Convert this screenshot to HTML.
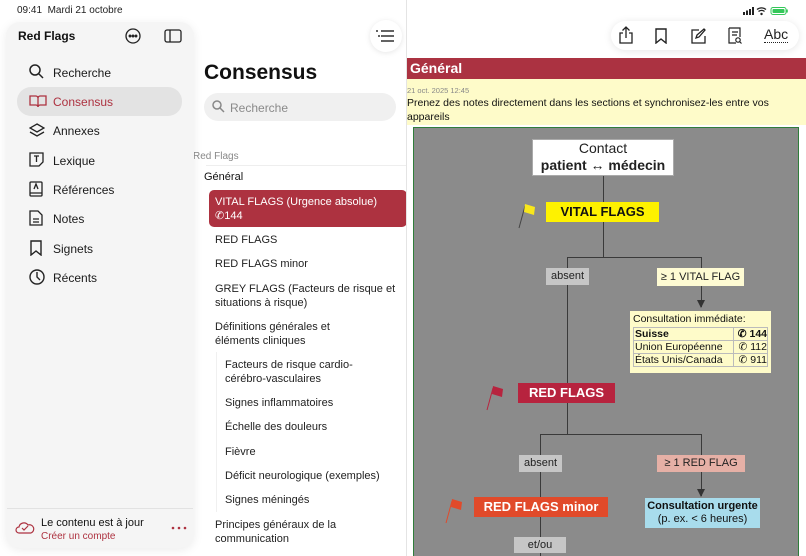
<!DOCTYPE html>
<html style="overflow:hidden;width:806px;height:556px"><head><meta charset="utf-8"><style>
*{margin:0;padding:0;box-sizing:border-box}
body{width:806px;height:556px;overflow:hidden;background:#fff;font-family:"Liberation Sans",sans-serif;position:relative;color:#111}
.a{position:absolute}
.sb{left:6px;top:22px;width:188px;height:526px;background:#f5f5f5;border-radius:14px;box-shadow:0 2px 10px rgba(0,0,0,.08)}
.nav{position:absolute;left:53px;font-size:12px;color:#1a1a1a}
.ic{position:absolute;left:29px}
.li{position:absolute;font-size:11px;color:#222;line-height:14px}
.dg{left:413px;top:127px;width:386px;height:440px;background:#8b8b8b;border:1px solid #2f7d3a}
.bx{position:absolute;text-align:center;font-size:11px;color:#222}
.ln{position:absolute;background:#3a3a3a}
</style></head><body>
<div class="a" style="left:17px;top:5px;font-size:10px;color:#222">09:41&nbsp;&nbsp;Mardi 21 octobre</div>
<svg class="a" style="left:743px;top:6px" width="46" height="10"><rect x="0" y="6" width="2" height="3" fill="#222"/><rect x="3" y="4.5" width="2" height="4.5" fill="#222"/><rect x="6" y="3" width="2" height="6" fill="#222"/><rect x="9" y="1" width="2" height="8" fill="#222"/><path d="M14 3.5a7 7 0 0 1 9 0M15.5 5.5a4.5 4.5 0 0 1 6 0" stroke="#222" stroke-width="1.3" fill="none"/><circle cx="18.5" cy="8" r="1.2" fill="#222"/><rect x="28" y="1.5" width="15" height="7" rx="2" fill="none" stroke="#34c759" stroke-width="1"/><rect x="29.5" y="3" width="12" height="4" rx="1" fill="#34c759"/><rect x="43.5" y="3.5" width="1.3" height="3" fill="#34c759"/></svg>
<!-- middle column -->
<div class="a" style="left:370px;top:20px;width:32px;height:32px;border-radius:16px;background:#fff;box-shadow:0 1px 6px rgba(0,0,0,.1)"></div>
<svg class="a" style="left:375px;top:29px" width="20" height="14" stroke="#222" stroke-width="1.4"><line x1="6" y1="2" x2="19" y2="2"/><line x1="6" y1="7" x2="19" y2="7"/><line x1="6" y1="12" x2="19" y2="12"/><line x1="1" y1="2" x2="3" y2="2"/><line x1="3" y1="7" x2="5" y2="7"/></svg>
<div class="a" style="left:204px;top:61px;font-size:21px;font-weight:bold">Consensus</div>
<div class="a" style="left:204px;top:93px;width:192px;height:28px;border-radius:14px;background:#f0f0f0"></div>
<svg class="a" style="left:212px;top:100px" width="13" height="13" stroke="#888" stroke-width="1.5" fill="none"><circle cx="5" cy="5" r="4"/><line x1="8" y1="8" x2="12" y2="12"/></svg>
<div class="a" style="left:230px;top:101px;font-size:12px;color:#8a8a8a">Recherche</div>
<div class="a" style="left:193px;top:151px;font-size:10px;color:#888">Red Flags</div>
<div class="a" style="left:206px;top:165px;width:200px;height:1px;background:#eee"></div>
<div class="a" style="left:204px;top:171px;font-size:11px;font-weight:500">Général</div>
<div class="a" style="left:209px;top:190px;width:198px;height:37px;border-radius:5px;background:#ad3240"></div>
<div class="li" style="left:215px;top:195px;color:#fff">VITAL FLAGS (Urgence absolue)<br>✆144</div>
<div class="li" style="left:215px;top:233px">RED FLAGS</div>
<div class="li" style="left:215px;top:257px">RED FLAGS minor</div>
<div class="li" style="left:215px;top:282px">GREY FLAGS (Facteurs de risque et<br>situations à risque)</div>
<div class="li" style="left:215px;top:320px">Définitions générales et<br>éléments cliniques</div>
<div class="a" style="left:216px;top:352px;width:1px;height:160px;background:#f0f0f0"></div>
<div class="li" style="left:225px;top:358px">Facteurs de risque cardio-<br>cérébro-vasculaires</div>
<div class="li" style="left:225px;top:396px">Signes inflammatoires</div>
<div class="li" style="left:225px;top:420px">Échelle des douleurs</div>
<div class="li" style="left:225px;top:445px">Fièvre</div>
<div class="li" style="left:225px;top:469px">Déficit neurologique (exemples)</div>
<div class="li" style="left:225px;top:493px">Signes méningés</div>
<div class="li" style="left:215px;top:518px">Principes généraux de la<br>communication</div>
<div class="a" style="left:406px;top:0;width:1px;height:556px;background:#e4e4e4"></div>
<!-- sidebar -->
<div class="a sb"></div>
<div class="a" style="left:18px;top:29px;font-size:12px;font-weight:bold">Red Flags</div>
<svg class="a" style="left:125px;top:28px" width="16" height="16" fill="none" stroke="#222" stroke-width="1.3"><circle cx="8" cy="8" r="7"/><circle cx="5" cy="8" r=".8" fill="#222"/><circle cx="8" cy="8" r=".8" fill="#222"/><circle cx="11" cy="8" r=".8" fill="#222"/></svg>
<svg class="a" style="left:164px;top:29px" width="18" height="14" fill="none" stroke="#222" stroke-width="1.3"><rect x="1" y="1" width="16" height="12" rx="2"/><line x1="6" y1="1" x2="6" y2="13"/></svg>
<div class="a" style="left:17px;top:87px;width:165px;height:29px;border-radius:14px;background:#e3e3e3"></div>
<svg class="ic" style="top:64px" width="16" height="16" fill="none" stroke="#222" stroke-width="1.5"><circle cx="6" cy="6" r="5"/><line x1="10" y1="10" x2="14" y2="14"/></svg>
<div class="nav" style="top:66px">Recherche</div>
<svg class="ic" style="top:94px" width="18" height="14" fill="none" stroke="#ad3240" stroke-width="1.3"><path d="M1 2h6c1 0 2 1 2 2v9c0-1-1-2-2-2H1zM17 2h-6c-1 0-2 1-2 2v9c0-1 1-2 2-2h6z"/></svg>
<div class="nav" style="top:95px;color:#ad3240">Consensus</div>
<svg class="ic" style="top:123px" width="16" height="15" fill="none" stroke="#222" stroke-width="1.3"><path d="M8 1l7 4-7 4-7-4z"/><path d="M1 9l7 4 7-4"/></svg>
<div class="nav" style="top:124px">Annexes</div>
<svg class="ic" style="top:152px" width="15" height="15" fill="none" stroke="#222" stroke-width="1.3"><path d="M1 1h13v9l-4 4H1z"/><path d="M5 4h5M7.5 4v6"/></svg>
<div class="nav" style="top:154px">Lexique</div>
<svg class="ic" style="top:181px" width="14" height="16" fill="none" stroke="#222" stroke-width="1.3"><rect x="1" y="1" width="12" height="14" rx="1"/><path d="M1 12h12M5 8l2-5 2 5"/></svg>
<div class="nav" style="top:183px">Références</div>
<svg class="ic" style="top:210px" width="14" height="16" fill="none" stroke="#222" stroke-width="1.3"><path d="M1 1h8l4 4v10H1z"/><path d="M4 9h6M4 12h6"/></svg>
<div class="nav" style="top:212px">Notes</div>
<svg class="ic" style="top:240px" width="14" height="16" fill="none" stroke="#222" stroke-width="1.4"><path d="M2 1h10v14l-5-4-5 4z"/></svg>
<div class="nav" style="top:242px">Signets</div>
<svg class="ic" style="top:269px" width="16" height="16" fill="none" stroke="#222" stroke-width="1.4"><circle cx="8" cy="8" r="7"/><path d="M8 3v5l3 3"/></svg>
<div class="nav" style="top:271px">Récents</div>
<div class="a" style="left:7px;top:508px;width:186px;height:1px;background:#e2e2e2"></div>
<svg class="a" style="left:15px;top:519px" width="20" height="15" fill="none" stroke="#ad3240" stroke-width="1.2"><path d="M5 14H4a3 3 0 010-6 5 5 0 019-2 4 4 0 013 8z"/><path d="M7 9l2 2 4-4"/></svg>
<div class="a" style="left:41px;top:517px;font-size:11px">Le contenu est à jour</div>
<div class="a" style="left:41px;top:531px;font-size:10px;color:#ad3240">Créer un compte</div>
<svg class="a" style="left:171px;top:526px" width="16" height="4" fill="#ad3240"><circle cx="2" cy="2" r="1.3"/><circle cx="8" cy="2" r="1.3"/><circle cx="14" cy="2" r="1.3"/></svg>
<!-- toolbar -->
<div class="a" style="left:611px;top:21px;width:188px;height:29px;border-radius:15px;background:#fff;box-shadow:0 1px 8px rgba(0,0,0,.1)"></div>
<svg class="a" style="left:618px;top:26px" width="16" height="18" fill="none" stroke="#222" stroke-width="1.3"><path d="M5 7H2v10h12V7h-3M8 12V1M4.5 4.5L8 1l3.5 3.5"/></svg>
<svg class="a" style="left:655px;top:28px" width="12" height="16" fill="none" stroke="#222" stroke-width="1.4"><path d="M1 1h10v14l-5-4-5 4z"/></svg>
<svg class="a" style="left:690px;top:28px" width="16" height="16" fill="none" stroke="#222" stroke-width="1.3"><path d="M9 2H2v13h13V8"/><path d="M6 10l1-3 7-6 1 1-6 7z"/></svg>
<svg class="a" style="left:728px;top:27px" width="14" height="18" fill="none" stroke="#222" stroke-width="1.2"><path d="M1 1h11v9M8 16H1V1"/><path d="M4 5h6M4 8h5"/><circle cx="10" cy="13" r="2.2"/><path d="M11.5 14.5l2 2"/></svg>
<div class="a" style="left:764px;top:27px;font-size:14px;color:#222;border-bottom:1px dotted #222;line-height:15px">Abc</div>
<!-- content -->
<div class="a" style="left:407px;top:58px;width:399px;height:21px;background:#ab3241"></div>
<div class="a" style="left:410px;top:60px;font-size:14px;font-weight:bold;color:#fff">Général</div>
<div class="a" style="left:407px;top:79px;width:399px;height:46px;background:#fefbc9"></div>
<div class="a" style="left:407px;top:86px;font-size:7.5px;color:#888">21 oct. 2025 12:45</div>
<div class="a" style="left:407px;top:96px;font-size:10.5px;line-height:14px;color:#111">Prenez des notes directement dans les sections et synchronisez-les entre vos<br>appareils</div>
<div class="a dg" style="height:430px"></div>
<!-- lines -->
<div class="ln" style="left:603px;top:176px;width:1px;height:81px"></div>
<div class="ln" style="left:567px;top:257px;width:135px;height:1px"></div>
<div class="ln" style="left:567px;top:257px;width:1px;height:177px"></div>
<div class="ln" style="left:701px;top:257px;width:1px;height:50px"></div>
<div class="ln" style="left:540px;top:434px;width:162px;height:1px"></div>
<div class="ln" style="left:540px;top:434px;width:1px;height:122px"></div>
<div class="ln" style="left:701px;top:434px;width:1px;height:62px"></div>
<div class="a" style="left:697px;top:300px;border-left:4px solid transparent;border-right:4px solid transparent;border-top:8px solid #333"></div>
<div class="a" style="left:697px;top:489px;border-left:4px solid transparent;border-right:4px solid transparent;border-top:8px solid #333"></div>
<div class="bx" style="left:532px;top:139px;width:142px;height:37px;background:#fff;font-size:14px;line-height:17px;border:1px solid #aaa">Contact<br><b>patient ↔ médecin</b></div>
<div class="bx" style="left:546px;top:202px;width:113px;height:20px;background:#fef200;font-size:13px;line-height:20px;font-weight:bold;color:#111">VITAL FLAGS</div>
<div class="bx" style="left:546px;top:268px;width:43px;height:17px;background:#c6c6c6;line-height:17px">absent</div>
<div class="bx" style="left:657px;top:268px;width:87px;height:18px;background:#fefbd3;line-height:18px">≥ 1 VITAL FLAG</div>
<div class="bx" style="left:630px;top:311px;width:141px;height:62px;background:#fefbc9;text-align:left;padding:2px 3px;font-size:10.5px;color:#111">Consultation immédiate:
<table style="border-collapse:collapse;font-size:10.5px;line-height:12px;margin-top:2px;width:135px;border:1px solid #444">
<tr><td style="border:1px solid #bbb;padding:0 1px"><b>Suisse</b></td><td style="border:1px solid #bbb;text-align:right"><b>✆ 144</b></td></tr>
<tr><td style="border:1px solid #bbb;padding:0 1px">Union Européenne</td><td style="border:1px solid #bbb;text-align:right">✆ 112</td></tr>
<tr><td style="border:1px solid #bbb;padding:0 1px">États Unis/Canada</td><td style="border:1px solid #bbb;text-align:right">✆ 911</td></tr></table></div>
<div class="bx" style="left:518px;top:383px;width:97px;height:20px;background:#b7233e;font-size:13px;line-height:20px;font-weight:bold;color:#fff">RED FLAGS</div>
<div class="bx" style="left:519px;top:455px;width:43px;height:17px;background:#c6c6c6;line-height:17px">absent</div>
<div class="bx" style="left:657px;top:455px;width:88px;height:17px;background:#e6b0a6;line-height:17px">≥ 1 RED FLAG</div>
<div class="bx" style="left:474px;top:497px;width:134px;height:20px;background:#e14a2a;font-size:13px;line-height:20px;font-weight:bold;color:#fff">RED FLAGS minor</div>
<div class="bx" style="left:645px;top:498px;width:115px;height:30px;background:#a8dcec;line-height:13px;padding-top:2px;color:#111"><b>Consultation urgente</b><br>(p. ex. &lt; 6 heures)</div>
<div class="bx" style="left:514px;top:537px;width:52px;height:16px;background:#c6c6c6;line-height:16px">et/ou</div>
<!-- flags -->
<svg class="a" style="left:517px;top:201px" width="24" height="28"><line x1="2" y1="27" x2="8" y2="5" stroke="#444" stroke-width="1"/><path d="M8 3l10 3-1 8-10-3z" fill="#f8e71c"/></svg>
<svg class="a" style="left:485px;top:383px" width="24" height="28"><line x1="2" y1="27" x2="8" y2="5" stroke="#b7233e" stroke-width="1"/><path d="M8 3l10 3-1 8-10-3z" fill="#b7233e"/></svg>
<svg class="a" style="left:444px;top:496px" width="24" height="28"><line x1="2" y1="27" x2="8" y2="5" stroke="#e14a2a" stroke-width="1"/><path d="M8 3l10 3-1 8-10-3z" fill="#e14a2a"/></svg>
</body></html>
